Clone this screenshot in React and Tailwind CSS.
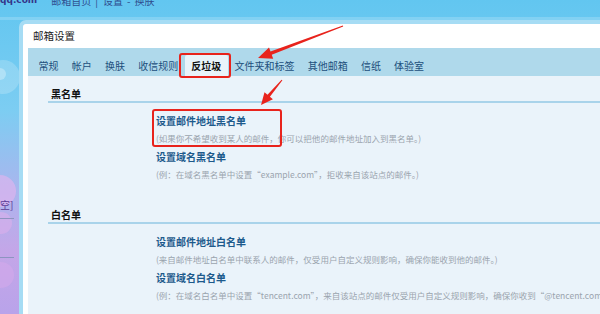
import React from "react";

const font = { fontFamily: '"Noto Sans CJK SC", "Noto Sans", sans-serif' };

function Tab({ label, active }) {
  return (
    <div
      className={
        "h-[21px] px-[6.6px] flex items-center text-[10px] leading-none shrink-0 " +
        (active ? "bg-[#e9f3fa] text-[#111] font-bold rounded-t-[2px]" : "text-[#1d4f7c]")
      }
    >
      {label}
    </div>
  );
}

function Item({ title, desc }) {
  return (
    <div className="pl-[108px]">
      <div className="h-[18px] flex items-center text-[10px] font-bold text-[#1d5a8c] whitespace-nowrap">{title}</div>
      <div className="h-[18px] flex items-center text-[8.5px] text-[#9aa4ae] whitespace-nowrap">{desc}</div>
    </div>
  );
}

function Section({ title, children }) {
  return (
    <div className="ml-[20px]">
      <div className="h-[18px] pl-[3px] flex items-center text-[10px] font-bold text-[#111] border-b-2 border-[#a9d3ea]">
        {title}
      </div>
      <div className="pt-[8px]">{children}</div>
    </div>
  );
}

export default function App() {
  const tabs = ["常规", "帐户", "换肤", "收信规则", "反垃圾", "文件夹和标签", "其他邮箱", "信纸", "体验室"];
  return (
    <div
      className="relative w-[600px] h-[314px] overflow-hidden bg-[linear-gradient(180deg,#62c6f0_0%,#7ccdf2_35%,#a9b6ee_60%,#c4a6e8_80%,#b9a3ea_100%)]"
      style={font}
    >
      {/* bokeh */}
      <div className="absolute left-[-14px] top-[60px] w-[34px] h-[34px] rounded-full bg-white/20" />
      <div className="absolute left-[-6px] top-[68px] w-[12px] h-[12px] rounded-full bg-white/30" />
      <div className="absolute left-[-16px] top-[175px] w-[32px] h-[32px] rounded-full bg-[#e6b4ee]/60" />
      <div className="absolute left-[-10px] top-[212px] w-[22px] h-[22px] rounded-full bg-[#e2b0ec]/50" />
      <div className="absolute left-[-12px] top-[262px] w-[26px] h-[26px] rounded-full bg-[#d7aaec]/50" />

      {/* top bar */}
      <div className="relative h-[20px] overflow-hidden">
        <div className="relative -top-[4px] flex items-start text-[10px] leading-none">
          <span className="font-bold text-[#35358a]" style={{ fontFamily: '"DejaVu Sans", sans-serif', fontSize: 9 }}>qq.com</span>
          <span className="ml-[14px] text-[#2f4d8e]">邮箱首页</span>
          <span className="ml-[4px] text-[#2f4d8e]">|</span>
          <span className="ml-[5px] text-[#2f4d8e]">设置</span>
          <span className="ml-[4px] text-[#2f4d8e]">-</span>
          <span className="ml-[4px] text-[#2f4d8e]">换肤</span>
        </div>
        <div className="absolute left-0 right-0 bottom-0 h-[3px] bg-[#8fd6f4]/70" />
      </div>

      <div className="relative flex h-[294px]">
        {/* left sidebar */}
        <div className="w-[19px] shrink-0 relative">
          <div className="absolute left-0 top-[180px] text-[10px] leading-none text-[#5b3b96]">空]</div>
          <div className="absolute left-0 top-[198px] w-[14px] h-px bg-[#8d94c0]" />
          <div className="absolute left-0 top-[237px] w-[14px] h-px bg-[#8d94c0]" />
        </div>

        {/* panel */}
        <div className="flex-1 min-w-0 overflow-hidden rounded-tl-[7px] border-l-[4px] border-t-[4px] border-[#a6dcf4] bg-white flex flex-col">
          <div className="h-[24px] pl-[10px] flex items-center text-[10.5px] text-[#222]">邮箱设置</div>
          <div className="flex-1 ml-[5px] flex flex-col">
            <div className="h-[28px] bg-[#afd9eb] flex items-end pl-[4px] pb-0">
              {tabs.map((t) => (
                <Tab key={t} label={t} active={t === "反垃圾"} />
              ))}
            </div>
            <div className="flex-1 bg-[#eaf3fa] pt-[9px]">
              <Section title="黑名单">
                <Item title="设置邮件地址黑名单" desc="(如果你不希望收到某人的邮件，你可以把他的邮件地址加入到黑名单。)" />
                <Item title="设置域名黑名单" desc="(例：在域名黑名单中设置“example.com”，拒收来自该站点的邮件。)" />
              </Section>
              <div className="h-[23px]" />
              <Section title="白名单">
                <Item title="设置邮件地址白名单" desc="(来自邮件地址白名单中联系人的邮件，仅受用户自定义规则影响，确保你能收到他的邮件。)" />
                <Item title="设置域名白名单" desc="(例：在域名白名单中设置“tencent.com”，来自该站点的邮件仅受用户自定义规则影响，确保你收到“@tencent.com”发来的邮件。)" />
              </Section>
            </div>
          </div>
        </div>
      </div>

      {/* annotations */}
      <div className="absolute left-[179px] top-[53px] w-[52px] h-[25px] border-2 border-[#e8231c] rounded-[3px]" />
      <div className="absolute left-[152px] top-[109px] w-[130px] h-[38px] border-2 border-[#e8231c] rounded-[3px]" />
      <svg className="absolute left-0 top-0" width="600" height="314" viewBox="0 0 600 314">
        <polygon fill="#e8231c" points="343.2,26.5 271.7,54.8 273.2,58.7 258,58 269,47.4 270.5,51.4 342.8,25.5" />
        <polygon fill="#e8231c" points="282.4,80.3 269.9,96.8 272.9,99.3 261,105 264.5,92.3 267.5,94.8 281.6,79.7" />
      </svg>
    </div>
  );
}
